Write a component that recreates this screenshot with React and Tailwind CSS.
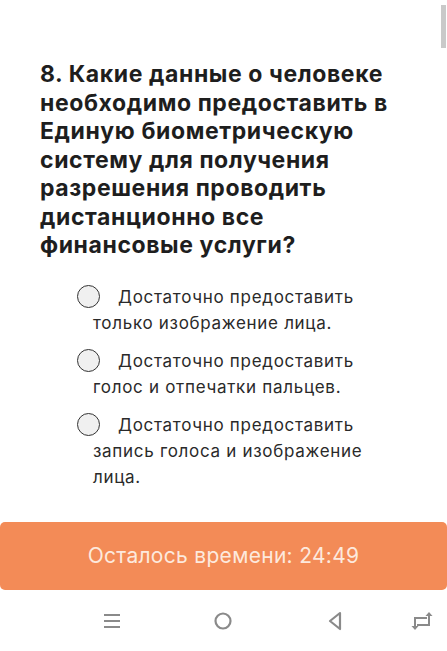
import { useState } from 'react'

const options = [
  'Достаточно предоставить только изображение лица.',
  'Достаточно предоставить голос и отпечатки пальцев.',
  'Достаточно предоставить запись голоса и изображение лица.',
]

function Radio({ checked, onClick }) {
  return (
    <span
      onClick={onClick}
      className="inline-block align-middle w-[23px] h-[23px] rounded-full border-[1.5px] border-[#333] bg-[#f0f0f0] -ml-[16px] mr-[18px] -mt-[3px]"
    >
      {checked && <span className="block w-[11px] h-[11px] m-[4.5px] rounded-full bg-[#f38b57]" />}
    </span>
  )
}

export default function App() {
  const [picked, setPicked] = useState(null)

  return (
    <div className="relative w-[447px] h-[651px] bg-white overflow-hidden flex flex-col" style={{ fontFamily: 'Inter, "Noto Sans", sans-serif' }}>
      <div className="absolute right-[1px] top-[5px] w-[5px] h-[43px] bg-[#c9c9c9]" />

      <div className="flex-1 flex flex-col">
        <h1 className="mt-[60px] ml-[40px] mr-[40px] text-[23px] leading-[28.5px] font-bold text-[#1e1e1e] tracking-[0.6px]">
          8. Какие данные о человеке необходимо предоставить в Единую биометрическую систему для получения разрешения проводить дистанционно все финансовые услуги?
        </h1>

        <div className="mt-[24px] flex flex-col gap-[12px]">
          {options.map((o, i) => (
            <label
              key={i}
              className="w-[372px] pl-[93px] text-[17px] leading-[26px] text-[#2a2a2a] font-normal tracking-[0.7px] cursor-pointer"
              onClick={() => setPicked(i)}
            >
              <Radio checked={picked === i} />
              {o}
            </label>
          ))}
        </div>
      </div>

      <div className="h-[68px] rounded-[5px] bg-[#f38b57] flex items-center justify-center text-[21px] text-[#fde9dd] tracking-[0.3px]">
        Осталось времени: 24:49
      </div>

      <div className="h-[61px] flex items-center text-[#8a8a8a]">
        <svg width="18" height="16" viewBox="0 0 18 16" className="ml-[103px]">
          <path d="M1 2h16M1 8h16M1 14h16" stroke="currentColor" strokeWidth="2" />
        </svg>
        <svg width="20" height="20" viewBox="0 0 20 20" className="ml-[92px]">
          <circle cx="10" cy="10" r="7.5" stroke="currentColor" strokeWidth="2.2" fill="none" />
        </svg>
        <svg width="16" height="20" viewBox="0 0 16 20" className="ml-[94px]">
          <path d="M13 2 L3 10 L13 18 Z" stroke="currentColor" strokeWidth="2.2" fill="none" strokeLinejoin="round" />
        </svg>
        <svg width="22" height="18" viewBox="0 0 22 18" className="ml-[68px]">
          <path d="M4 16V6h12" stroke="currentColor" strokeWidth="2" fill="none" />
          <path d="M18 3v10H6" stroke="currentColor" strokeWidth="2" fill="none" />
          <path d="M18 0l-3.5 4h7z M4 18l-3.5-4h7z" fill="currentColor" />
        </svg>
      </div>
    </div>
  )
}
